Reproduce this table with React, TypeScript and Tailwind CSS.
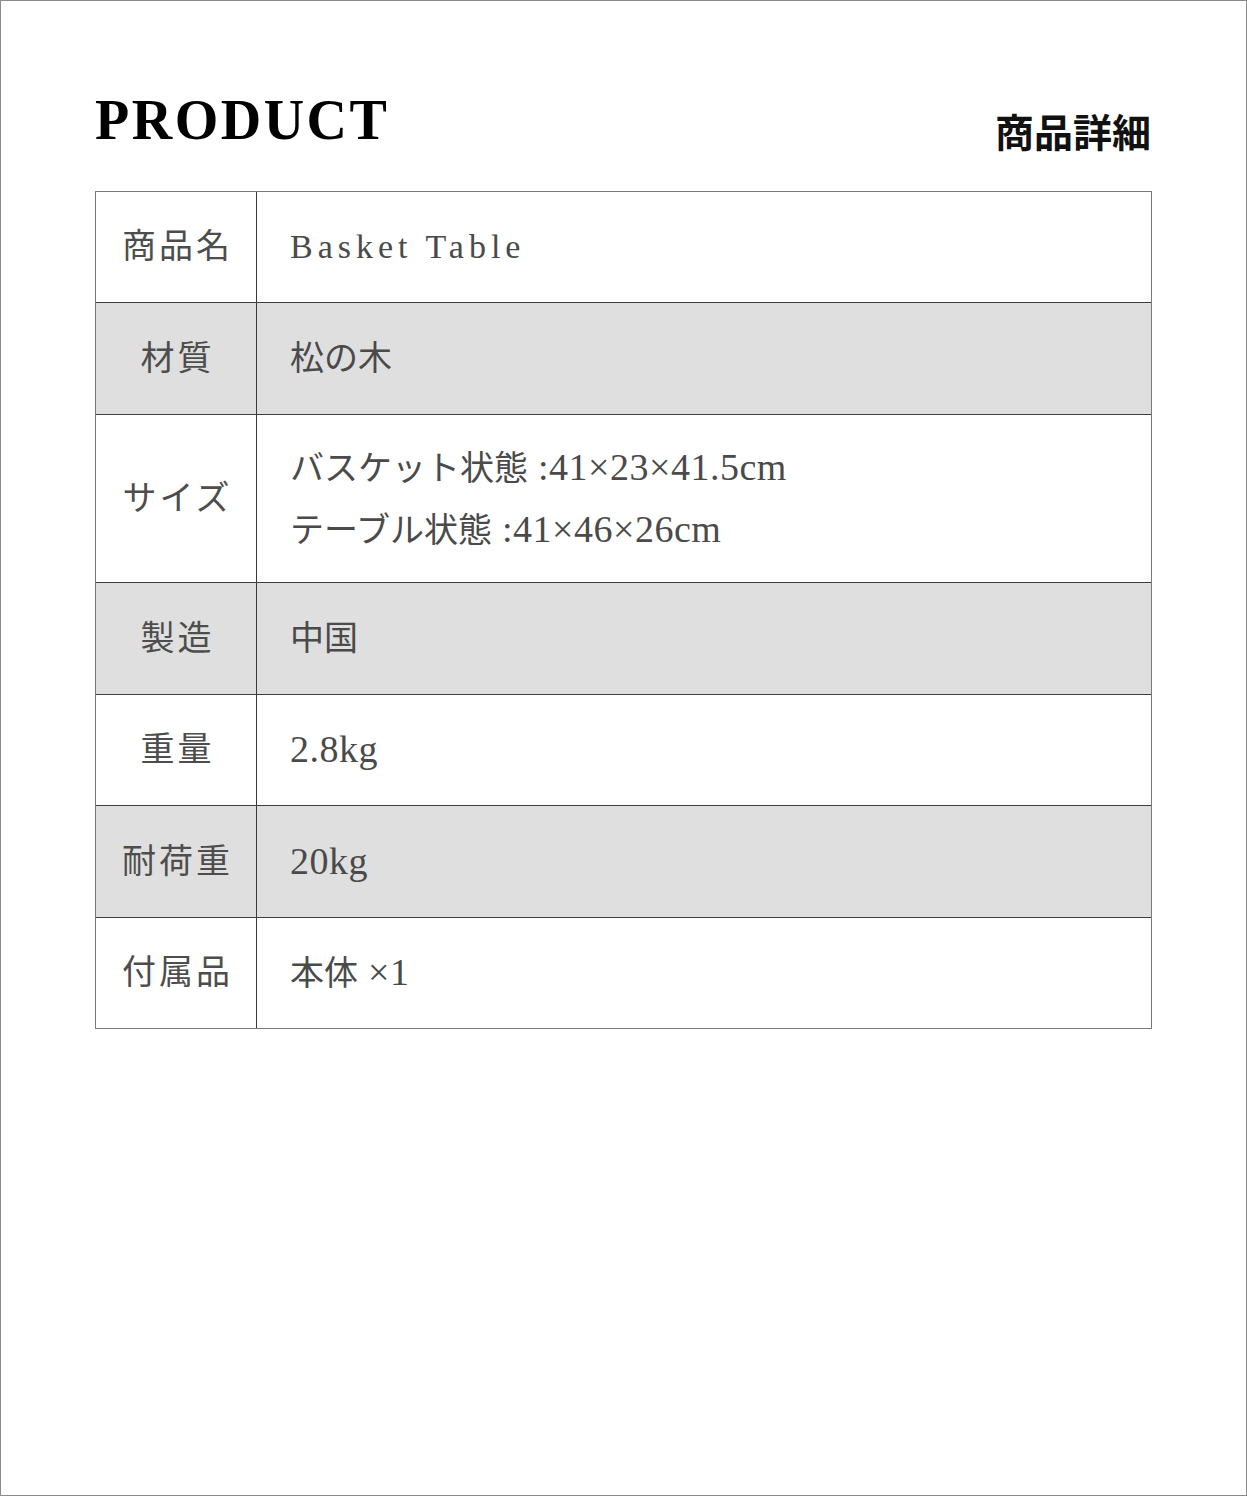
import React from 'react';

const serif = { fontFamily: '"Liberation Serif", "Noto Sans CJK JP", serif' };

interface SpecRow {
  label: string;
  values: string[];
  height: string;
  shaded?: boolean;
  latin?: boolean;
}

const rows: SpecRow[] = [
  { label: '商品名', values: ['Basket Table'], height: 'h-[110px]', latin: true },
  { label: '材質', values: ['松の木'], height: 'h-[112px]', shaded: true },
  { label: 'サイズ', values: ['バスケット状態 :41×23×41.5cm', 'テーブル状態 :41×46×26cm'], height: 'h-[168px]' },
  { label: '製造', values: ['中国'], height: 'h-[112px]', shaded: true },
  { label: '重量', values: ['2.8kg'], height: 'h-[111px]' },
  { label: '耐荷重', values: ['20kg'], height: 'h-[112px]', shaded: true },
  { label: '付属品', values: ['本体 ×1'], height: 'h-[111px]' },
];

// latin runs (digits, units) are set a little larger than the kana/kanji
function Mixed({ text }: { text: string }) {
  const parts = text.split(/([\x20-\x7e×]+)/).filter(Boolean);
  return (
    <>
      {parts.map((p, i) =>
        /^[\x20-\x7e×]+$/.test(p) ? (
          <span key={i} className="text-[38px] tracking-[0.5px]">{p}</span>
        ) : (
          <span key={i}>{p}</span>
        )
      )}
    </>
  );
}

export default function App() {
  return (
    <div className="w-[1247px] h-[1496px] bg-white border border-[#8a8a8a] px-[94px] pt-[91px]" style={serif}>
      <div className="flex justify-between items-start mb-[38px]">
        <h1 className="text-[56px] leading-none font-bold tracking-[2.5px] text-black">PRODUCT</h1>
        <h2 className="mt-[22px] mr-[1px] text-[39px] leading-none font-bold text-[#111]">商品詳細</h2>
      </div>

      <div className="border border-[#7a7a7a]">
        {rows.map((row, i) => (
          <div
            key={row.label}
            className={`flex ${row.height} ${i > 0 ? 'border-t border-[#3f3f3f]' : ''} ${row.shaded ? 'bg-[#dfdfdf]' : 'bg-white'}`}
          >
            <div className="w-[161px] shrink-0 border-r border-[#3a3a3a] flex items-center justify-center pl-[3px]">
              <span className="text-[34px] tracking-[3px] text-[#4d4d4d] leading-none">{row.label}</span>
            </div>
            <div className="flex-1 flex flex-col justify-center pl-[33px]">
              {row.values.map((v) =>
                row.latin ? (
                  <div key={v} className="text-[34px] leading-[60px] tracking-[5px] text-[#4a4a4a]">
                    {v}
                  </div>
                ) : (
                  <div key={v} className="text-[34px] leading-[60px] text-[#4a4a4a]">
                    <Mixed text={v} />
                  </div>
                )
              )}
            </div>
          </div>
        ))}
      </div>
    </div>
  );
}
